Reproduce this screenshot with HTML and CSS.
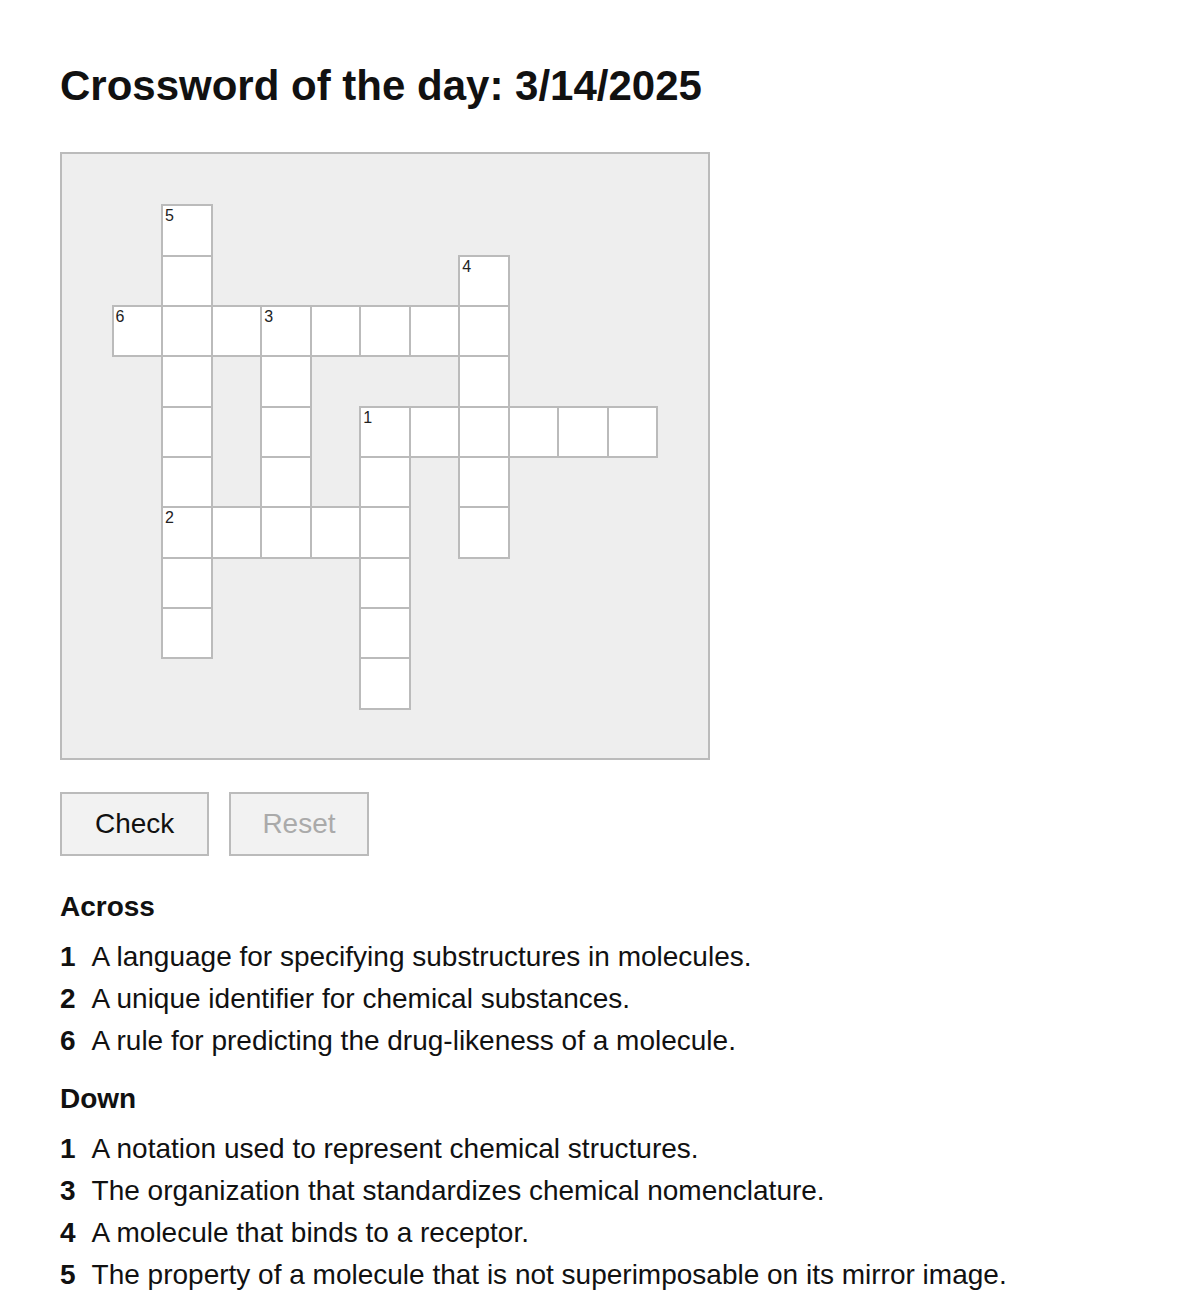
FILE: index.html
```html
<!DOCTYPE html>
<html lang="en">
<head>
<meta charset="utf-8">
<title>Crossword of the day</title>
<link rel="stylesheet" href="styles.css">
</head>
<body>
<main class="page">
  <h1 class="title">Crossword of the day: 3/14/2025</h1>

  <div class="board">
    <div class="grid">
      <!-- 5 down: col 3, rows 2-10 -->
      <div class="cell" style="grid-area: 2 / 3"><span class="num">5</span></div>
      <div class="cell" style="grid-area: 3 / 3"></div>
      <div class="cell" style="grid-area: 4 / 3"></div>
      <div class="cell" style="grid-area: 5 / 3"></div>
      <div class="cell" style="grid-area: 6 / 3"></div>
      <div class="cell" style="grid-area: 7 / 3"></div>
      <div class="cell" style="grid-area: 8 / 3"><span class="num">2</span></div>
      <div class="cell" style="grid-area: 9 / 3"></div>
      <div class="cell" style="grid-area: 10 / 3"></div>
      <!-- 4 down: col 9, rows 3-8 -->
      <div class="cell" style="grid-area: 3 / 9"><span class="num">4</span></div>
      <div class="cell" style="grid-area: 4 / 9"></div>
      <div class="cell" style="grid-area: 5 / 9"></div>
      <div class="cell" style="grid-area: 6 / 9"></div>
      <div class="cell" style="grid-area: 7 / 9"></div>
      <div class="cell" style="grid-area: 8 / 9"></div>
      <!-- 6 across: row 4, cols 2-9 -->
      <div class="cell" style="grid-area: 4 / 2"><span class="num">6</span></div>
      <div class="cell" style="grid-area: 4 / 4"></div>
      <div class="cell" style="grid-area: 4 / 5"><span class="num">3</span></div>
      <div class="cell" style="grid-area: 4 / 6"></div>
      <div class="cell" style="grid-area: 4 / 7"></div>
      <div class="cell" style="grid-area: 4 / 8"></div>
      <!-- 3 down: col 5, rows 4-8 -->
      <div class="cell" style="grid-area: 5 / 5"></div>
      <div class="cell" style="grid-area: 6 / 5"></div>
      <div class="cell" style="grid-area: 7 / 5"></div>
      <div class="cell" style="grid-area: 8 / 5"></div>
      <!-- 1 across: row 6, cols 7-12 -->
      <div class="cell" style="grid-area: 6 / 7"><span class="num">1</span></div>
      <div class="cell" style="grid-area: 6 / 8"></div>
      <div class="cell" style="grid-area: 6 / 10"></div>
      <div class="cell" style="grid-area: 6 / 11"></div>
      <div class="cell" style="grid-area: 6 / 12"></div>
      <!-- 1 down: col 7, rows 6-11 -->
      <div class="cell" style="grid-area: 7 / 7"></div>
      <div class="cell" style="grid-area: 8 / 7"></div>
      <div class="cell" style="grid-area: 9 / 7"></div>
      <div class="cell" style="grid-area: 10 / 7"></div>
      <div class="cell" style="grid-area: 11 / 7"></div>
      <!-- 2 across: row 8, cols 3-7 -->
      <div class="cell" style="grid-area: 8 / 4"></div>
      <div class="cell" style="grid-area: 8 / 6"></div>
    </div>
  </div>

  <div class="actions">
    <button class="btn btn-check" type="button">Check</button>
    <button class="btn btn-reset" type="button" disabled>Reset</button>
  </div>

  <section class="clues">
    <h2 class="clues-heading">Across</h2>
    <ol class="clue-list">
      <li class="clue"><span class="clue-num">1</span>A language for specifying substructures in molecules.</li>
      <li class="clue"><span class="clue-num">2</span>A unique identifier for chemical substances.</li>
      <li class="clue"><span class="clue-num">6</span>A rule for predicting the drug-likeness of a molecule.</li>
    </ol>
  </section>

  <section class="clues">
    <h2 class="clues-heading">Down</h2>
    <ol class="clue-list">
      <li class="clue"><span class="clue-num">1</span>A notation used to represent chemical structures.</li>
      <li class="clue"><span class="clue-num">3</span>The organization that standardizes chemical nomenclature.</li>
      <li class="clue"><span class="clue-num">4</span>A molecule that binds to a receptor.</li>
      <li class="clue"><span class="clue-num">5</span>The property of a molecule that is not superimposable on its mirror image.</li>
    </ol>
  </section>
</main>
</body>
</html>
```

FILE: styles.css
```css
* {
  box-sizing: border-box;
}

html, body {
  margin: 0;
  padding: 0;
  background: #fff;
}

body {
  font-family: "Liberation Sans", Arial, sans-serif;
  color: #111;
  font-size: 28px;
}

.page {
  padding: 62px 60px 20px;
}

.title {
  margin: 0 0 42px;
  font-size: 42px;
  line-height: 48px;
  font-weight: bold;
  color: #111;
}

.board {
  width: 650px;
  height: 608px;
  background: #eee;
  border: 2px solid #bbb;
}

.grid {
  width: 100%;
  height: 100%;
  padding-right: 2px;
  display: grid;
  grid-template-columns: repeat(13, 1fr);
  grid-template-rows: repeat(12, 1fr);
}

.cell {
  margin: 0 -2px -2px 0;
  background: #fff;
  border: 2px solid #bbb;
  padding: 1px 2px 0;
}

.num {
  display: block;
  font-size: 16px;
  line-height: 18px;
  color: #222;
}

.actions {
  display: flex;
  gap: 20px;
  margin-top: 32px;
}

.btn {
  font-family: "Liberation Sans", Arial, sans-serif;
  font-size: 28px;
  line-height: 32px;
  padding: 14px 32px;
  background: #f2f2f2;
  border: 2px solid #bbb;
  border-radius: 0;
  color: #111;
  cursor: pointer;
}

.btn-check {
  padding-left: 33px;
  padding-right: 33px;
}

.btn-reset {
  padding-left: 31px;
  padding-right: 31px;
}

.btn:disabled {
  color: #aaa;
  cursor: default;
}

.clues {
  margin-top: 30px;
}

.clues + .clues {
  margin-top: 16px;
}

.clues-heading {
  margin: 0 0 8px;
  font-size: 28px;
  line-height: 42px;
  font-weight: bold;
}

.clue-list {
  list-style: none;
  margin: 0;
  padding: 0;
}

.clue {
  line-height: 42px;
  display: flex;
}

.clue-num {
  font-weight: bold;
  margin-right: 16px;
}
```
